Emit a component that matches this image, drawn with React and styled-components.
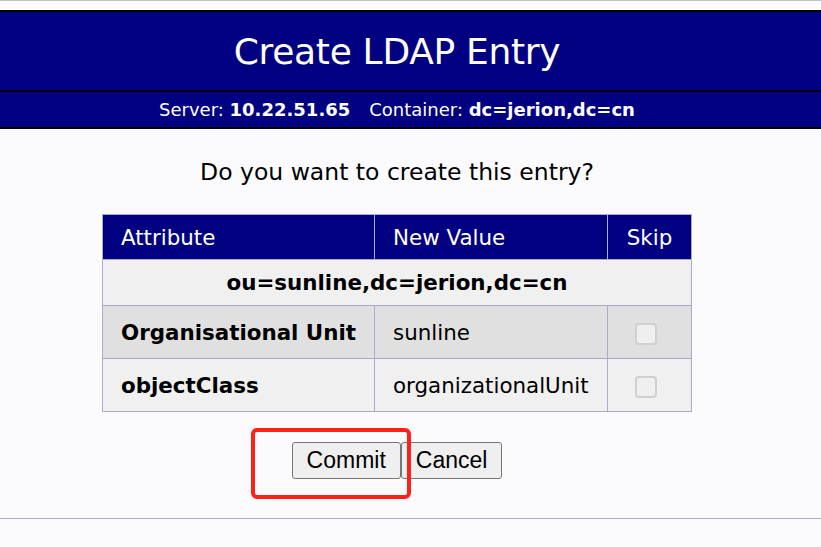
import styled, { createGlobalStyle } from "styled-components";

const GlobalStyle = createGlobalStyle`
  html, body {
    margin: 0;
    padding: 0;
  }
  body {
    background: #fbfbfd;
    border-top: 1px solid #c4c4c8;
    font-family: "DejaVu Sans", Verdana, sans-serif;
    color: #000;
  }
`;

const Page = styled.div`
  position: relative;
  padding-top: 9px;
`;

const TitleBar = styled.h1`
  margin: 0;
  background: #000080;
  color: #fff;
  border-top: 2px solid #000;
  border-bottom: 2px solid #000;
  height: 78px;
  padding-right: 27px;
  display: flex;
  align-items: center;
  justify-content: center;
  font-weight: normal;
  font-size: 36px;
  letter-spacing: -0.3px;
`;

const InfoBar = styled.div`
  background: #000080;
  color: #fff;
  border-bottom: 2px solid #000;
  height: 35px;
  padding-right: 27px;
  display: flex;
  align-items: center;
  justify-content: center;
  gap: 19px;
  font-size: 18px;
`;

const Main = styled.div`
  display: flex;
  flex-direction: column;
  align-items: center;
  border-bottom: 1px solid #aaaacc;
  height: 389px;
  padding-right: 27px;
`;

const Question = styled.p`
  margin: 29px 0 28px;
  font-size: 23.5px;
  line-height: 28px;
`;

const Table = styled.table`
  border-collapse: collapse;
  font-size: 21.4px;
`;

const Th = styled.th`
  background: #000080;
  color: #fff;
  font-weight: normal;
  text-align: ${({ $center }) => ($center ? "center" : "left")};
  border: 1px solid #aaaacc;
  height: 45px;
  padding: 0 18px;
  width: ${({ $w }) => $w}px;
  box-sizing: border-box;
`;

const Td = styled.td`
  background: ${({ $bg }) => $bg};
  border: 1px solid #aaaacc;
  padding: 0 18px;
  height: ${({ $h }) => $h}px;
  white-space: nowrap;
  font-weight: ${({ $bold }) => ($bold ? "bold" : "normal")};
  text-align: ${({ $center }) => ($center ? "center" : "left")};
`;

const Check = styled.span`
  display: inline-block;
  width: 18px;
  height: 18px;
  margin-right: 8px;
  border: 2px solid #d0d0d0;
  border-radius: 4px;
  background: #efefef;
  vertical-align: middle;
`;

const Buttons = styled.div`
  display: flex;
  margin-top: 30px;
`;

const Button = styled.button`
  font-family: "Liberation Sans", Arial, sans-serif;
  font-size: 23px;
  height: 37px;
  padding: 0 14px;
  background: #efefef;
  border: 1px solid #767676;
  border-radius: 3px;
  color: #000;
`;

const Highlight = styled.div`
  position: absolute;
  left: 251px;
  top: 427px;
  width: 152px;
  height: 63px;
  border: 4px solid #fe2019;
  border-radius: 6px;
  pointer-events: none;
`;

const rows = [
  { attr: "Organisational Unit", value: "sunline", bg: "#e0e0e0", h: 52 },
  { attr: "objectClass", value: "organizationalUnit", bg: "#f0f0f0", h: 52 },
];

export default function App() {
  return (
    <>
      <GlobalStyle />
      <Page>
        <TitleBar>Create LDAP Entry</TitleBar>
        <InfoBar>
          <span>
            Server: <b>10.22.51.65</b>
          </span>
          <span>
            Container: <b>dc=jerion,dc=cn</b>
          </span>
        </InfoBar>
        <Main>
          <Question>Do you want to create this entry?</Question>
          <Table>
            <thead>
              <tr>
                <Th $w={272}>Attribute</Th>
                <Th $w={233}>New Value</Th>
                <Th $w={84} $center>
                  Skip
                </Th>
              </tr>
            </thead>
            <tbody>
              <tr>
                <Td colSpan={3} $bg="#f0f0f0" $h={45} $bold $center>
                  ou=sunline,dc=jerion,dc=cn
                </Td>
              </tr>
              {rows.map(({ attr, value, bg, h }) => (
                <tr key={attr}>
                  <Td $bg={bg} $h={h} $bold>
                    {attr}
                  </Td>
                  <Td $bg={bg} $h={h}>
                    {value}
                  </Td>
                  <Td $bg={bg} $h={h} $center>
                    <Check />
                  </Td>
                </tr>
              ))}
            </tbody>
          </Table>
          <Buttons>
            <Button>Commit</Button>
            <Button>Cancel</Button>
          </Buttons>
        </Main>
        <Highlight />
      </Page>
    </>
  );
}
